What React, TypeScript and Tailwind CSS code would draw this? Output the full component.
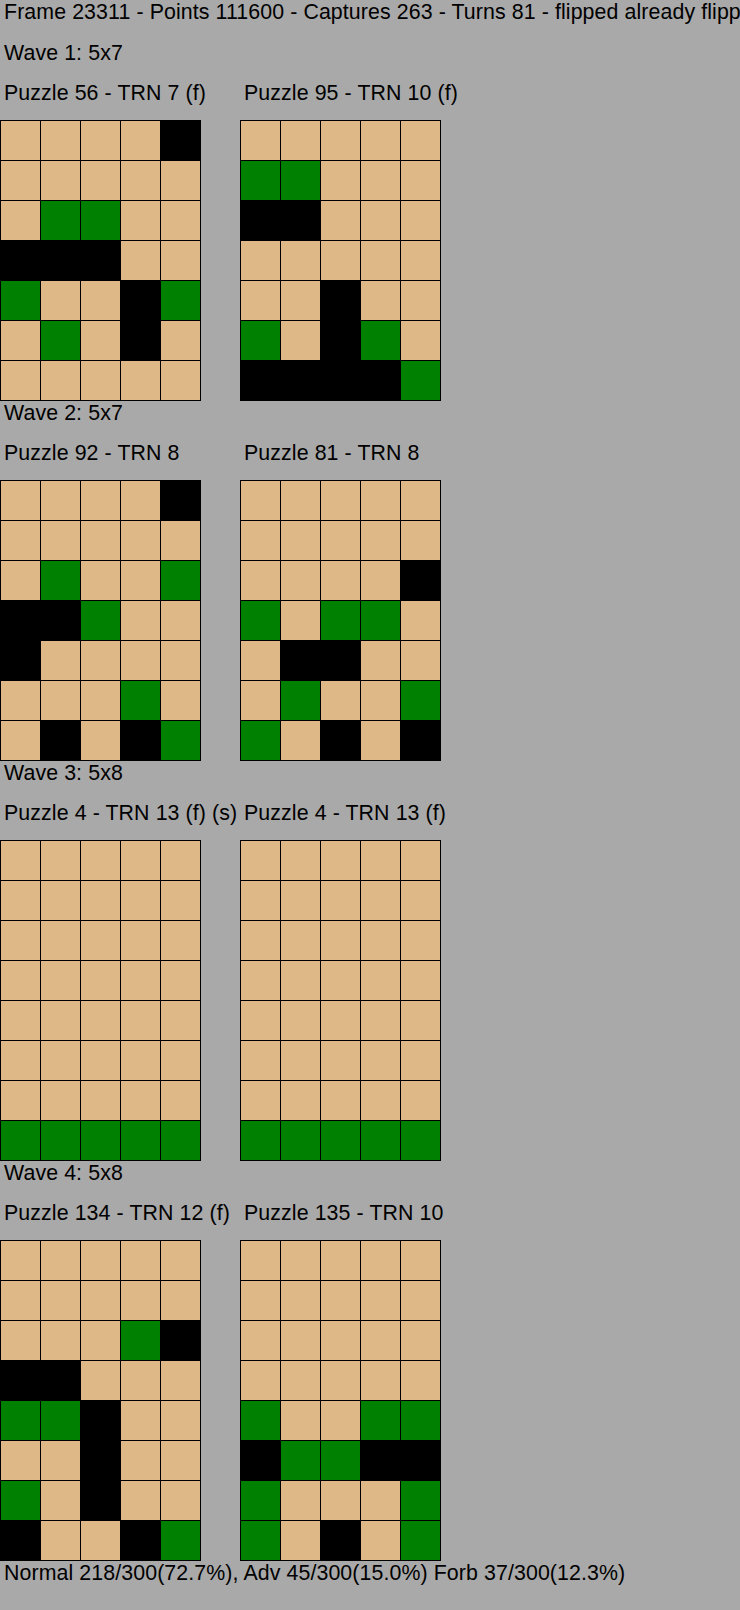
import React from "react";

type Puzzle = { label: string; rows: string[] };
type Wave = { title: string; puzzles: Puzzle[] };

const waves: Wave[] = [
  {
    title: "Wave 1: 5x7",
    puzzles: [
      {
        label: "Puzzle 56 - TRN 7 (f)",
        rows: ["TTTTB", "TTTTT", "TGGTT", "BBBTT", "GTTBG", "TGTBT", "TTTTT"],
      },
      {
        label: "Puzzle 95 - TRN 10 (f)",
        rows: ["TTTTT", "GGTTT", "BBTTT", "TTTTT", "TTBTT", "GTBGT", "BBBBG"],
      },
    ],
  },
  {
    title: "Wave 2: 5x7",
    puzzles: [
      {
        label: "Puzzle 92 - TRN 8",
        rows: ["TTTTB", "TTTTT", "TGTTG", "BBGTT", "BTTTT", "TTTGT", "TBTBG"],
      },
      {
        label: "Puzzle 81 - TRN 8",
        rows: ["TTTTT", "TTTTT", "TTTTB", "GTGGT", "TBBTT", "TGTTG", "GTBTB"],
      },
    ],
  },
  {
    title: "Wave 3: 5x8",
    puzzles: [
      {
        label: "Puzzle 4 - TRN 13 (f) (s)",
        rows: ["TTTTT", "TTTTT", "TTTTT", "TTTTT", "TTTTT", "TTTTT", "TTTTT", "GGGGG"],
      },
      {
        label: "Puzzle 4 - TRN 13 (f)",
        rows: ["TTTTT", "TTTTT", "TTTTT", "TTTTT", "TTTTT", "TTTTT", "TTTTT", "GGGGG"],
      },
    ],
  },
  {
    title: "Wave 4: 5x8",
    puzzles: [
      {
        label: "Puzzle 134 - TRN 12 (f)",
        rows: ["TTTTT", "TTTTT", "TTTGB", "BBTTT", "GGBTT", "TTBTT", "GTBTT", "BTTBG"],
      },
      {
        label: "Puzzle 135 - TRN 10",
        rows: ["TTTTT", "TTTTT", "TTTTT", "TTTTT", "GTTGG", "BGGBB", "GTTTG", "GTBTG"],
      },
    ],
  },
];

function Cell({ c }: { c: string }) {
  if (c === "G") return <div className="bg-[#008000]" />;
  if (c === "B") return <div className="bg-black" />;
  return <div className="bg-[#deb887]" />;
}

function Board({ rows }: { rows: string[] }) {
  return (
    <div className="grid w-[201px] grid-cols-[repeat(5,39px)] auto-rows-[39px] gap-px bg-black p-px">
      {rows.flatMap((r, i) => r.split("").map((c, j) => <Cell key={`${i}-${j}`} c={c} />))}
    </div>
  );
}

export default function App() {
  return (
    <div className="min-h-[1610px] w-[740px] overflow-hidden bg-[#a9a9a9] font-['Liberation_Sans',Arial,sans-serif] text-[21.333px] leading-[24px] tracking-[0.1px] text-black">
      <div className="whitespace-nowrap pl-[4px]">
        Frame 23311 - Points 111600 - Captures 263 - Turns 81 - flipped already flipped
      </div>
      <div className="mt-[17px]">
        {waves.map((w, wi) => (
          <div key={wi}>
            <div className="whitespace-nowrap pl-[4px]">{w.title}</div>
            <div className="mt-[16px] flex">
              {w.puzzles.map((p, pi) => (
                <div key={pi} className="flex w-[240px] flex-col">
                  <div className="whitespace-nowrap pl-[4px]">{p.label}</div>
                  <div className="mt-[15px]">
                    <Board rows={p.rows} />
                  </div>
                </div>
              ))}
            </div>
          </div>
        ))}
        <div className="whitespace-nowrap pl-[4px]">
          Normal 218/300(72.7%), Adv 45/300(15.0%) Forb 37/300(12.3%)
        </div>
      </div>
    </div>
  );
}
